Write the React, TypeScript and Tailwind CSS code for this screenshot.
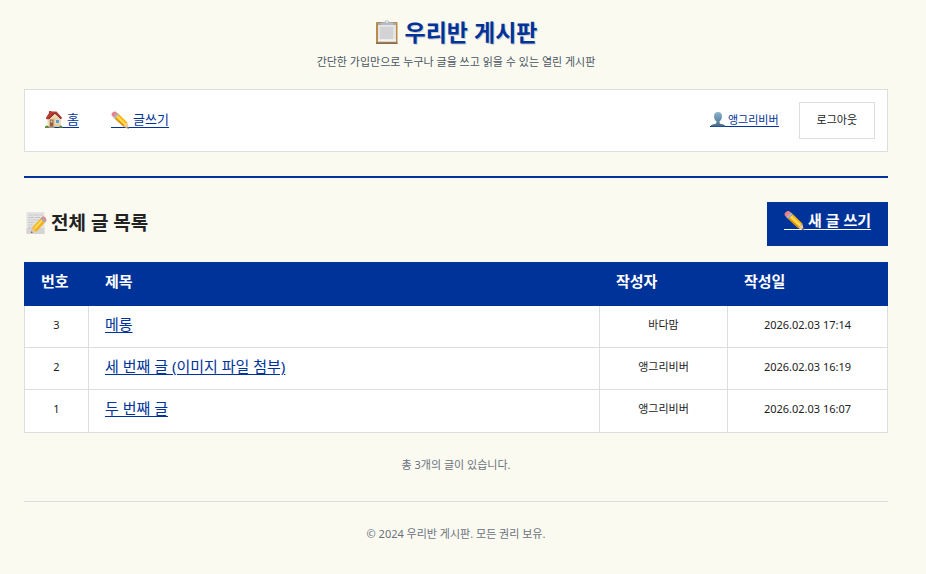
import React, { FC } from 'react'

type IconProps = { className?: string }

type Post = {
  id: number
  title: string
  author: string
  date: string
}

const posts: Post[] = [
  { id: 3, title: '메롱', author: '바다맘', date: '2026.02.03 17:14' },
  { id: 2, title: '세 번째 글 (이미지 파일 첨부)', author: '앵그리비버', date: '2026.02.03 16:19' },
  { id: 1, title: '두 번째 글', author: '앵그리비버', date: '2026.02.03 16:07' },
]

const Clipboard: FC<IconProps> = ({ className }) => (
  <svg className={className} viewBox="0 0 24 26" aria-hidden="true">
    <rect x="1" y="3" width="21.5" height="22" rx="1" fill="#b98a4e" />
    <path d="M1 23.5h21.5v1.5H1z" fill="#8a6a50" />
    <path d="M3 4h18v18.5H3z" fill="#e3e3e3" />
    <path d="M5 8h13v12H5z" fill="#d3d3d5" />
    <path d="M3 20.5h18v2H3z" fill="#f3f3f3" />
    <path d="M3 4h18v2H3z" fill="#a5abb3" />
    <path d="M6 6V3.6h3.5a2.4 2.4 0 0 1 4.8 0H18V6z" fill="#b4bec9" />
    <circle cx="12" cy="2.8" r="1" fill="#eef2f5" />
  </svg>
)

const House: FC<IconProps> = ({ className }) => (
  <svg className={className} viewBox="0 0 18 18" aria-hidden="true">
    <path d="M4 1h2.5v4H4z" fill="#9c5040" />
    <path d="M2.5 8 9 2.5 15.5 8v9h-13z" fill="#efd9ae" />
    <path d="M8 8h7.5v9H8z" fill="#e6c995" />
    <path d="M.8 8 5 1.5h6.5L17.3 8l-1.4 1-6-5.4L4 9.2H1.5z" fill="#b53a34" />
    <path d="M4 8.8 9.9 3.2l6.2 5.7" fill="none" stroke="#7c2926" strokeWidth="1" />
    <path d="M4.800 9.500h3.600V17H4.800z" fill="#9a5b38" />
    <path d="M5.600 10.500h1.800v2H5.600z" fill="#b9d7e4" />
    <path d="M10.500 9.500h4v4h-4z" fill="#5a9cc6" stroke="#f8f0df" strokeWidth=".7" />
    <path d="M3.500 16.300h6V18h-6z" fill="#a39b8e" />
    <path d="M0 17.500c0-2.200 2.200-2.800 3.200-1.200l.8 1.700H0zM14 17.700c.2-2 2-2.700 3-1.600l1 1.700z" fill="#5e8d3a" />
  </svg>
)

const Pencil: FC<IconProps> = ({ className }) => (
  <svg className={className} viewBox="0 0 20 20" aria-hidden="true">
    <path d="M.5 4.500C.3 2.200 2.600.1 5 .5l2.600 2.300-4.500 4.700z" fill="#e9818b" />
    <path d="m2.300 6.700 4.700-4.700L9 3.700 4.300 8.600z" fill="#adb4bb" />
    <path d="m4.300 8.600 4.700-4.900 9.300 9.200-4.200 4.600z" fill="#f6b914" />
    <path d="m6 6.800 1.700-1.600 9.400 9.300-1.500 1.500z" fill="#ffd95c" />
    <path d="m4.300 8.600.9-1 10 9-1.100.9z" fill="#d88d13" />
    <path d="m14.100 17.500 4.200-4.600 1.500 6.800z" fill="#eccb96" />
    <path d="m17.500 18.800 1.700-1.300.6 2.200z" fill="#514438" />
  </svg>
)

const Person: FC<IconProps> = ({ className }) => (
  <svg className={className} viewBox="0 0 16 16" aria-hidden="true">
    <defs>
      <linearGradient id="person-fill" x1="0" y1="0" x2="0" y2="1">
        <stop offset="0" stopColor="#8eb4d0" />
        <stop offset="1" stopColor="#426b89" />
      </linearGradient>
    </defs>
    <path
      d="M8 1C5.300 1 3.800 3 4 5.700c.1 2.200 1.200 3.700 2.400 4.600v1.500c0 .7-.6 1-1.400 1.200-2 .4-4.200.6-4.500 2.500h15c-.3-1.900-2.500-2.100-4.500-2.500-.8-.2-1.400-.5-1.400-1.200v-1.500c1.200-.9 2.300-2.400 2.400-4.600C12.200 3 10.700 1 8 1z"
      fill="url(#person-fill)"
    />
  </svg>
)

const Memo: FC<IconProps> = ({ className }) => (
  <svg className={className} viewBox="0 0 22 24" aria-hidden="true">
    <path d="M2 1h18v22H2z" fill="#e4e4e4" />
    <path d="M2 17h18v6H2z" fill="#d4d4d6" />
    <path
      d="M4 4h4m1 0h6m1 0h2M4 6.500h6m1 0h5M4 9h3m1 0h6M4 11.500h6M4 14h4M4 16.500h3"
      stroke="#b4b4b4"
      strokeWidth=".8"
      strokeDasharray="2 .6"
    />
    <path d="m6.500 22 1.200-6L12 20.500z" fill="#e8c793" />
    <path d="m7.500 16.500 8.300-8.800 4.500 4-8.400 9z" fill="#f3b21b" />
    <path d="m9 17 8-8.500 1.500 1.300-8 8.600z" fill="#ffd95a" />
    <path d="m15.800 7.700 1.300-1.400 4.400 4.100-1.200 1.300z" fill="#9ea6ad" />
    <path d="m17.100 6.300.8-.7c1.800-1 4.600 1.800 3.900 4.400l-.3.400z" fill="#e78287" />
    <path d="m6.500 22 .5-1.800 1.300 1.300z" fill="#4c4036" />
  </svg>
)

const Header: FC = () => (
  <header className="border-b-2 border-[#003399] pb-6">
    <div className="flex flex-col items-center pt-4">
      <h1 className="flex items-center gap-1.5 text-[23px] leading-8 font-bold text-[#003399] [text-shadow:1px_1px_0_#ccc]">
        <Clipboard className="h-[26px] w-6" />
        우리반 게시판
      </h1>
      <p className="mt-1 text-[11px] leading-5 text-[#4b5563]">
        간단한 가입만으로 누구나 글을 쓰고 읽을 수 있는 열린 게시판
      </p>
    </div>
    <nav className="mt-[17px] flex items-center justify-between border border-[#dddddd] bg-white p-3">
      <div className="flex gap-8 pb-1 pl-2 text-[13px] leading-[15px] text-[#003399]">
        <a href="#" className="flex items-end gap-1 border-b border-current">
          <House className="-mb-px size-[18px]" />
          홈
        </a>
        <a href="#" className="flex items-end gap-1 border-b border-current">
          <Pencil className="-mb-0.5 size-[18px]" />
          글쓰기
        </a>
      </div>
      <div className="flex items-center gap-5 text-[11px]">
        <a href="#" className="mb-1 flex items-end gap-0.5 border-b border-current leading-[13px] text-[#003399]">
          <Person className="-mb-px size-4" />
          앵그리비버
        </a>
        <button type="button" className="border border-[#dddddd] bg-white px-[17px] pt-[7px] pb-[9px] leading-[19px] text-[#222222]">
          로그아웃
        </button>
      </div>
    </nav>
  </header>
)

const PostTable: FC = () => (
  <table className="mt-4 w-full table-fixed border-collapse bg-white">
    <thead>
      <tr className="h-[43px] bg-[#003399] text-left text-[15px] leading-6 text-white">
        <th scope="col" className="w-16 border border-[#003399] px-4 pb-1.5">번호</th>
        <th scope="col" className="border border-[#003399] px-4 pb-1.5">제목</th>
        <th scope="col" className="w-32 border border-[#003399] px-4 pb-1.5">작성자</th>
        <th scope="col" className="w-40 border border-[#003399] px-4 pb-1.5">작성일</th>
      </tr>
    </thead>
    <tbody>
      {posts.map((post) => (
        <tr key={post.id} className="h-[42px] text-center text-[11px] leading-5 text-[#222222] last:h-[43px]">
          <td className="border border-[#dddddd] pb-1">{post.id}</td>
          <td className="border border-[#dddddd] px-4 pb-1.5 text-left text-[15px]">
            <a href="#" className="text-[#003399] underline underline-offset-2">{post.title}</a>
          </td>
          <td className="border border-[#dddddd] pb-1">{post.author}</td>
          <td className="border border-[#dddddd] pb-1">{post.date}</td>
        </tr>
      ))}
    </tbody>
  </table>
)

const App: FC = () => {
  return (
    <div className="min-h-screen bg-[#fafaf0] pr-[38px] pl-6 font-['Noto_Sans','Noto_Sans_CJK_KR',sans-serif] text-[#222222]">
      <Header />
      <main className="pt-6">
        <div className="flex items-center justify-between">
          <h2 className="flex items-center gap-1 pb-0.5 text-[19px] leading-7 font-bold">
            <Memo className="h-6 w-[23px]" />
            전체 글 목록
          </h2>
          <a href="#" className="bg-[#003399] px-[17px] pt-2 pb-4 text-[15px] font-bold text-white">
            <span className="flex items-end gap-1 border-b border-current leading-[18px]">
              <Pencil className="-mb-0.5 h-[21px] w-5" />
              새 글 쓰기
            </span>
          </a>
        </div>
        <PostTable />
        <p className="mt-[22px] text-center text-[11px] leading-5 text-[#6b7280]">총 3개의 글이 있습니다.</p>
      </main>
      <footer className="mt-[26px] border-t border-[#dddddd] py-[22px] text-center text-[11px] leading-5 text-[#6b7280]">
        © 2024 우리반 게시판. 모든 권리 보유.
      </footer>
    </div>
  )
}

export default App
